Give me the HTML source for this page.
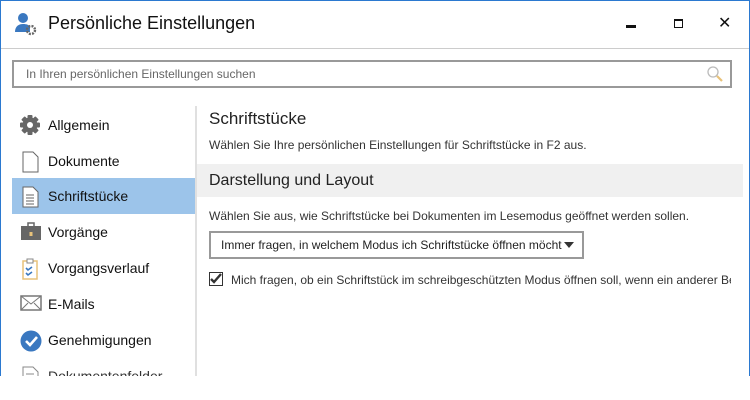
<!DOCTYPE html><html><head><meta charset="utf-8"><style>
*{margin:0;padding:0;box-sizing:border-box}
body{width:750px;height:400px;background:#fff;font-family:"Liberation Sans",sans-serif;color:#111;position:relative;overflow:hidden}
.a{position:absolute;white-space:nowrap}
.win{position:absolute;left:0;top:0;width:750px;height:376px;border:1px solid #2b79d0;border-bottom:none}
.it{position:absolute;left:12px;width:183px;height:36px;font-size:14px;line-height:36px;padding-left:36px}
.ic{position:absolute;left:8px;top:8px}
</style></head><body>
<div class="win"></div>
<svg class="a" style="left:14px;top:12px" width="24" height="24" viewBox="0 0 24 24"><circle cx="9" cy="6" r="5" fill="#3a78c0"/><path d="M1 20c0-6 4-8 8-8s6 1 7 3v5z" fill="#3a78c0"/><circle cx="17" cy="18" r="4" fill="none" stroke="#666" stroke-width="2.4" stroke-dasharray="2 1.2"/><circle cx="17" cy="18" r="1.2" fill="#fff"/></svg>
<div class="a" style="left:48px;top:13px;font-size:18px">Persönliche Einstellungen</div>
<div class="a" style="left:626px;top:25px;width:10px;height:3px;background:#111"></div>
<div class="a" style="left:674px;top:19px;width:9px;height:9px;border:1px solid #111;border-top-width:2px"></div>
<div class="a" style="left:718px;top:13px;font-size:16px">✕</div>
<div class="a" style="left:1px;top:48px;width:748px;height:1px;background:#ccc"></div>
<div class="a" style="left:12px;top:60px;width:720px;height:28px;border:2px solid #999"></div>
<div class="a" style="left:26px;top:67px;font-size:12px;color:#666">In Ihren persönlichen Einstellungen suchen</div>
<svg class="a" style="left:706px;top:65px" width="18" height="18"><circle cx="7" cy="7" r="5" fill="none" stroke="#bbb" stroke-width="1.3"/><path d="M11 11l5 5" stroke="#e8c27a" stroke-width="2.2"/></svg>
<div class="a" style="left:195px;top:106px;width:2px;height:270px;background:#e0e0e0"></div>
<div class="it" style="top:107px"><svg class="ic" width="20" height="20" viewBox="0 0 20 20"><g fill="#666"><rect x="7.5" y="0" width="5" height="20" rx="1"/><rect x="7.5" y="0" width="5" height="20" rx="1" transform="rotate(45 10 10)"/><rect x="7.5" y="0" width="5" height="20" rx="1" transform="rotate(90 10 10)"/><rect x="7.5" y="0" width="5" height="20" rx="1" transform="rotate(135 10 10)"/><circle cx="10" cy="10" r="7.5"/></g><circle cx="10" cy="10" r="3" fill="#fff"/></svg>Allgemein</div>
<div class="it" style="top:143px"><svg class="ic" width="20" height="22" viewBox="0 0 20 22"><path d="M3 1h10l5 5v15H3z" fill="#fff" stroke="#666"/></svg>Dokumente</div>
<div class="it" style="top:178px;background:#9cc4ea"><svg class="ic" width="20" height="22" viewBox="0 0 20 22"><path d="M3 1h10l5 5v15H3z" fill="#fff" stroke="#666"/><path d="M6 9h8M6 12h8M6 15h8M6 18h8" stroke="#666"/></svg>Schriftstücke</div>
<div class="it" style="top:214px"><svg class="ic" width="22" height="20" viewBox="0 0 22 20"><rect x="1" y="4" width="20" height="14" fill="#666"/><rect x="8" y="1" width="6" height="4" fill="none" stroke="#666" stroke-width="1.5"/><rect x="9.5" y="10" width="3" height="4" fill="#e8c27a"/></svg>Vorgänge</div>
<div class="it" style="top:250px"><svg class="ic" width="20" height="22" viewBox="0 0 20 22"><rect x="3" y="3" width="14" height="18" fill="#fff" stroke="#e8c27a" stroke-width="1.5"/><rect x="7" y="1" width="6" height="4" fill="#fff" stroke="#888"/><path d="M6 10l2 2 4-3M6 15l2 2 4-3" stroke="#3a78c0" stroke-width="1.6" fill="none"/></svg>Vorgangsverlauf</div>
<div class="it" style="top:286px"><svg class="ic" width="22" height="18" viewBox="0 0 22 18"><rect x="1" y="2" width="20" height="14" fill="#fff" stroke="#777" stroke-width="1.5"/><path d="M1 2l10 8 10-8M1 16l7-7M21 16l-7-7" stroke="#777" fill="none"/></svg>E-Mails</div>
<div class="it" style="top:322px"><svg class="ic" width="22" height="22" viewBox="0 0 22 22"><circle cx="11" cy="11" r="10.5" fill="#3a78c0"/><path d="M6 11l4 4 7-8" stroke="#fff" stroke-width="2.6" fill="none"/></svg>Genehmigungen</div>
<div class="it" style="top:358px;height:18px;overflow:hidden;color:#333"><svg class="ic" width="20" height="22" viewBox="0 0 20 22"><path d="M3 1h10l5 5v15H3z" fill="#fff" stroke="#888"/><path d="M6 8h8M6 11h8" stroke="#888"/></svg>Dokumentenfelder</div>
<div class="a" style="left:209px;top:109px;font-size:17px;color:#222">Schriftstücke</div>
<div class="a" style="left:209px;top:138px;font-size:12px;color:#333">Wählen Sie Ihre persönlichen Einstellungen für Schriftstücke in F2 aus.</div>
<div class="a" style="left:197px;top:164px;width:546px;height:33px;background:#f0f0f0"></div>
<div class="a" style="left:209px;top:172px;font-size:16px;color:#222">Darstellung und Layout</div>
<div class="a" style="left:209px;top:209px;font-size:12px;color:#333">Wählen Sie aus, wie Schriftstücke bei Dokumenten im Lesemodus geöffnet werden sollen.</div>
<div class="a" style="left:209px;top:231px;width:375px;height:28px;border:2px solid #999;overflow:hidden;font-size:12px;line-height:24px;padding-left:10px;color:#222">Immer fragen, in welchem Modus ich Schriftstücke öffnen möcht</div>
<div class="a" style="left:564px;top:242px;width:0;height:0;border-left:5px solid transparent;border-right:5px solid transparent;border-top:6px solid #333"></div>
<div class="a" style="left:209px;top:272px;width:14px;height:14px;border:1px solid #333;background:#fff"></div>
<svg class="a" style="left:209px;top:272px" width="14" height="14"><path d="M2 7l3 3 7-8" stroke="#333" stroke-width="2.4" fill="none"/></svg>
<div class="a" style="left:231px;top:273px;font-size:12px;color:#333;width:500px;overflow:hidden">Mich fragen, ob ein Schriftstück im schreibgeschützten Modus öffnen soll, wenn ein anderer Be</div>
</body></html>
